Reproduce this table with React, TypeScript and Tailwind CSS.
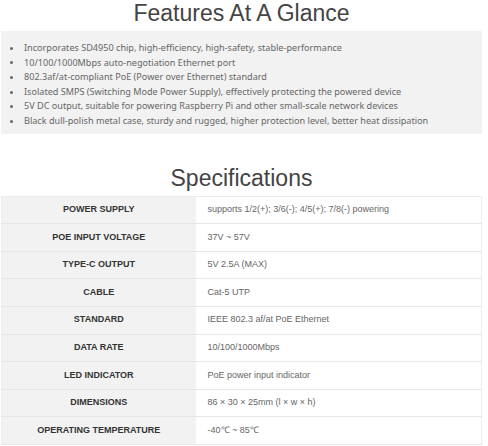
const features = [
  "Incorporates SD4950 chip, high-efficiency, high-safety, stable-performance",
  "10/100/1000Mbps auto-negotiation Ethernet port",
  "802.3af/at-compliant PoE (Power over Ethernet) standard",
  "Isolated SMPS (Switching Mode Power Supply), effectively protecting the powered device",
  "5V DC output, suitable for powering Raspberry Pi and other small-scale network devices",
  "Black dull-polish metal case, sturdy and rugged, higher protection level, better heat dissipation",
];

const specs = [
  ["POWER SUPPLY", "supports 1/2(+); 3/6(-); 4/5(+); 7/8(-) powering"],
  ["POE INPUT VOLTAGE", "37V ~ 57V"],
  ["TYPE-C OUTPUT", "5V 2.5A (MAX)"],
  ["CABLE", "Cat-5 UTP"],
  ["STANDARD", "IEEE 802.3 af/at PoE Ethernet"],
  ["DATA RATE", "10/100/1000Mbps"],
  ["LED INDICATOR", "PoE power input indicator"],
  ["DIMENSIONS", "86 × 30 × 25mm (l × w × h)"],
  ["OPERATING TEMPERATURE", "-40℃ ~ 85℃"],
];

export default function App() {
  return (
    <div className="w-[488px] h-[446px] overflow-hidden bg-white font-['Liberation_Sans',Arial,sans-serif]">
      <div className="ml-[1px] w-[481px]">
        {/* Features */}
        <h2 className="text-center text-[23px] leading-[26px] text-[#444] h-[31px]">
          Features At A Glance
        </h2>
        <ul className="bg-[#f2f2f2] pl-[9px] pt-[10px] pb-[5px] font-['Noto_Sans',sans-serif] text-[9.1px] text-[#666]">
          {features.map((f) => (
            <li key={f} className="flex items-center h-[14.6px] leading-[14.6px]">
              <span className="w-[3px] h-[3px] rounded-full bg-[#666] mr-[11px] shrink-0" />
              {f}
            </li>
          ))}
        </ul>

        {/* Specifications */}
        <h2 className="text-center text-[23px] leading-[25px] text-[#444] pt-[32px] h-[62px]">
          Specifications
        </h2>
        <table className="w-full border-collapse border border-[#ececec] text-[9px]">
          <tbody>
            {specs.map(([k, v]) => (
              <tr key={k} className="h-[27.6px] border-b border-[#e6e6e6]">
                <td className="w-[194px] bg-[#f2f2f2] text-center font-bold text-[#333]">
                  {k}
                </td>
                <td className="pl-[12px] text-[#666]">{v}</td>
              </tr>
            ))}
          </tbody>
        </table>
      </div>
    </div>
  );
}
